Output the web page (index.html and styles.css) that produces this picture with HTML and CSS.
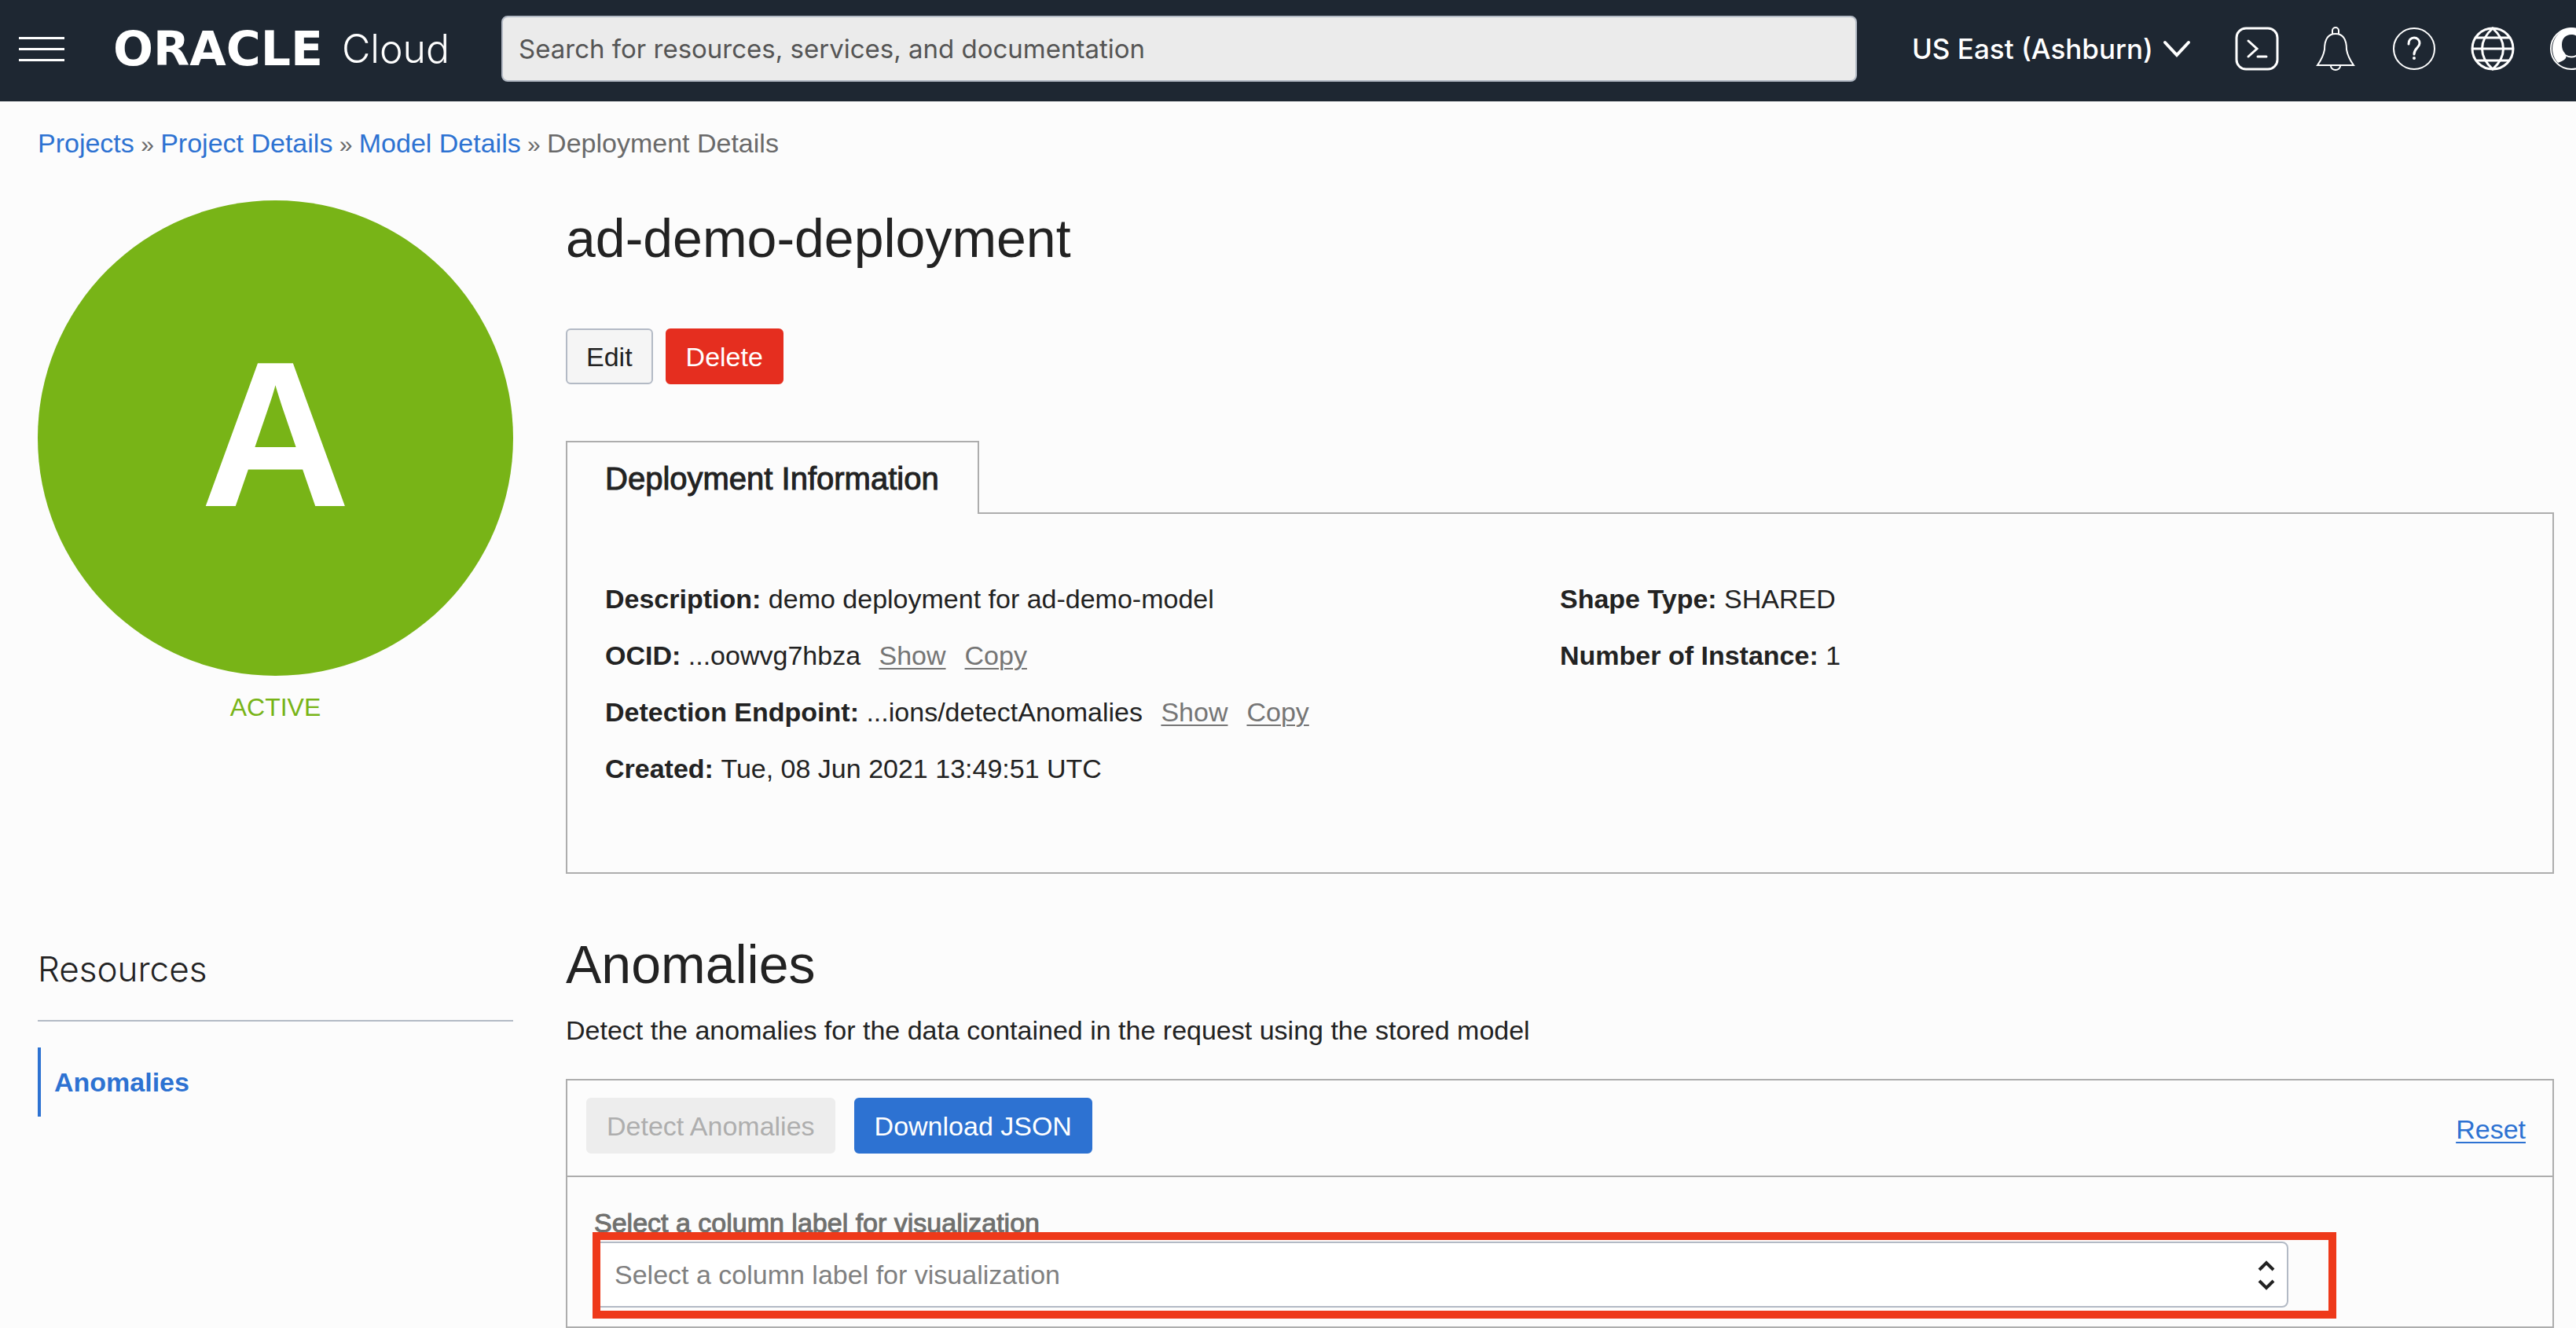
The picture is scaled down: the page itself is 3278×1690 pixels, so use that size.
FILE: index.html
```html
<!DOCTYPE html>
<html lang="en">
<head>
<meta charset="utf-8">
<title>Deployment Details</title>
<link rel="stylesheet" href="styles.css">
</head>
<body>
<header class="topbar">
  <button class="menu" aria-label="Open navigation menu"><span></span><span></span><span></span></button>
  <a class="brand" href="#"><span class="brand-name">ORACLE</span><span class="brand-product">Cloud</span></a>
  <input class="search" type="search" aria-label="Search" placeholder="Search for resources, services, and documentation">
  <div class="tools">
    <button class="region">US East (Ashburn)
      <svg width="36" height="24" viewBox="0 0 36 24" fill="none" stroke="currentColor" stroke-width="4" stroke-linecap="round"><path d="M3 4l15 16L33 4"/></svg>
    </button>
    <button class="tool" aria-label="Cloud Shell">
      <svg viewBox="0 0 56 56" fill="none" stroke="currentColor" stroke-width="3"><rect x="2" y="2" width="52" height="52" rx="12"/><path d="M17 18l11 10-11 10" stroke-linecap="round"/><path d="M29 38h11" stroke-linecap="round"/></svg>
    </button>
    <button class="tool" aria-label="Announcements">
      <svg viewBox="0 0 56 56" fill="none" stroke="currentColor" stroke-width="2"><path d="M24 9V5a4 4 0 0 1 8 0v4"/><path d="M5 49c5-7 8-14 9-20 0-14 5-20 14-20s14 6 14 20c1 6 4 13 9 20z"/><path d="M22 50a6 5 0 0 0 12 0"/></svg>
    </button>
    <button class="tool" aria-label="Help">
      <svg viewBox="0 0 56 56" fill="none" stroke="currentColor" stroke-width="2"><circle cx="28" cy="28" r="26"/><path d="M21 22c0-5 3-8 7-8s7 3 7 7c0 6-7 6-7 14" stroke-width="3" stroke-linecap="round"/><circle cx="28" cy="40" r="2" fill="currentColor" stroke="none"/></svg>
    </button>
    <button class="tool" aria-label="Language">
      <svg viewBox="0 0 56 56" fill="none" stroke="currentColor" stroke-width="3"><circle cx="28" cy="28" r="26"/><path d="M28 2C10 18 10 38 28 54C46 38 46 18 28 2z"/><path d="M2 28h52M7 14h42M7 43h42"/></svg>
    </button>
    <button class="tool" aria-label="Profile">
      <svg viewBox="0 0 56 56"><path fill="currentColor" d="M28 1a27 27 0 0 0-17 45c4-2 8-3 10-6 1-2 0-4-1-6-3-3-4-7-4-11 0-8 5-13 12-13s12 5 12 13c0 4-1 8-4 11-1 2-2 4-1 6 2 3 6 4 10 6A27 27 0 0 0 28 1z"/><path d="M20 36q8 5 16 0" fill="none" stroke="currentColor" stroke-width="2"/><circle cx="28" cy="28" r="26" fill="none" stroke="currentColor" stroke-width="2"/></svg>
    </button>
  </div>
</header>

<nav class="breadcrumb" aria-label="Breadcrumb">
  <a href="#">Projects</a><span class="sep"> » </span><a href="#">Project Details</a><span class="sep"> » </span><a href="#">Model Details</a><span class="sep"> » </span><span>Deployment Details</span>
</nav>

<div class="layout">
  <aside class="sidebar">
    <div class="status-badge">A</div>
    <p class="status-text">ACTIVE</p>
    <h3 class="resources-title">Resources</h3>
    <nav class="resources"><a class="resource-link" href="#anomalies">Anomalies</a></nav>
  </aside>

  <main class="content">
    <h1>ad-demo-deployment</h1>
    <div class="actions">
      <button class="btn btn-plain">Edit</button>
      <button class="btn btn-danger">Delete</button>
    </div>

    <div class="tabs" role="tablist"><button class="tab" role="tab" aria-selected="true">Deployment Information</button></div>
    <section class="details">
      <dl>
        <div><dt>Description:</dt> <dd>demo deployment for ad-demo-model</dd></div>
        <div><dt>OCID:</dt> <dd>...oowvg7hbza <a href="#">Show</a><a href="#">Copy</a></dd></div>
        <div><dt>Detection Endpoint:</dt> <dd>...ions/detectAnomalies <a href="#">Show</a><a href="#">Copy</a></dd></div>
        <div><dt>Created:</dt> <dd>Tue, 08 Jun 2021 13:49:51 UTC</dd></div>
      </dl>
      <dl>
        <div><dt>Shape Type:</dt> <dd>SHARED</dd></div>
        <div><dt>Number of Instance:</dt> <dd>1</dd></div>
      </dl>
    </section>

    <h2 id="anomalies">Anomalies</h2>
    <p class="lead">Detect the anomalies for the data contained in the request using the stored model</p>
    <section class="panel">
      <div class="toolbar">
        <button class="btn btn-disabled" disabled>Detect Anomalies</button>
        <button class="btn btn-primary">Download JSON</button>
        <a class="reset" href="#">Reset</a>
      </div>
      <div class="field">
        <label for="column">Select a column label for visualization</label>
        <div class="select-wrap">
          <select id="column"><option>Select a column label for visualization</option></select>
          <svg class="select-arrows" width="24" height="40" viewBox="0 0 24 40" fill="none" stroke="currentColor" stroke-width="4"><path d="M3 13l9-9 9 9M3 27l9 9 9-9"/></svg>
          <div class="highlight"></div>
        </div>
      </div>
    </section>
  </main>
</div>
</body>
</html>
```
FILE: styles.css
```css
* { box-sizing: border-box; }

body {
  margin: 0;
  background: #fcfcfc;
  color: #222;
  font: 34px/40px "Liberation Sans", Arial, sans-serif;
}

h1, h2, h3, p, dl, dd { margin: 0; }
a { color: #2d72d2; text-decoration: none; }
button, input, select { font: inherit; color: inherit; margin: 0; }
button { background: none; border: 0; padding: 0; cursor: pointer; }

.topbar {
  display: flex;
  align-items: center;
  height: 129px;
  padding: 0 0 5px 24px;
  overflow: hidden;
  background: #1e2732;
  color: #fff;
}

.menu {
  display: flex;
  flex-direction: column;
  gap: 11px;
  width: 58px;
  margin-right: 62px;
}
.menu span { height: 3px; background: #fff; }

.brand {
  display: flex;
  align-items: center;
  gap: 24px;
  width: 494px;
  color: #fff;
  white-space: nowrap;
}
.brand-name { font: bold 60px/64px "DejaVu Sans", sans-serif; }
.brand-product { font: 300 50px/64px Inter, sans-serif; }

.search {
  flex: 1;
  min-width: 0;
  height: 84px;
  padding: 0 20px;
  border: 2px solid #b3bac5;
  border-radius: 8px;
  background: #ebebeb;
  font-family: Inter, sans-serif;
  font-size: 33px;
}
.search::placeholder { color: #555; opacity: 1; }

.tools {
  display: flex;
  align-items: center;
  flex: none;
  gap: 44px;
  margin: 0 -22px 0 70px;
}
.tool, .tool svg { display: block; width: 56px; height: 56px; }
.region {
  display: flex;
  align-items: center;
  gap: 12px;
  margin-right: 12px;
  font-family: Inter, sans-serif;
  font-size: 35px;
  font-weight: 500;
}

.breadcrumb { padding: 33px 48px 0; color: #6a6a6a; }
.sep { font-size: 30px; line-height: 30px; }

.layout {
  display: flex;
  gap: 67px;
  padding: 53px 28px 0 48px;
}
.sidebar { flex: none; width: 605px; }
.content { flex: 1; min-width: 0; }

.status-badge {
  display: grid;
  place-items: center;
  aspect-ratio: 1;
  padding-bottom: 10px;
  border-radius: 50%;
  background: #78b417;
  color: #fff;
  font-size: 264px;
  font-weight: bold;
  line-height: 256px;
}
.status-text {
  margin-top: 20px;
  color: #78b417;
  font-size: 32px;
  text-align: center;
}
.resources-title {
  margin-top: 285px;
  padding-bottom: 37px;
  border-bottom: 2px solid #b3bac5;
  font: 300 44px/56px Inter, sans-serif;
}
.resources { margin-top: 33px; }
.resource-link {
  display: block;
  padding: 24px 17px;
  border-left: 4px solid #2d72d2;
  font-weight: bold;
}

h1, h2 { font-size: 68px; font-weight: normal; line-height: 80px; }
h1 { padding-top: 8px; }
h2 { margin-top: 75px; }

.actions { display: flex; gap: 16px; margin-top: 75px; }
.btn {
  height: 71px;
  padding: 0 24px;
  border: 2px solid transparent;
  border-radius: 6px;
}
.btn-plain { background: #f5f5f5; border-color: #b3bac5; }
.btn-danger { background: #e52e1f; border-color: #e52e1f; color: #fff; }
.btn-primary { background: #2d72d2; border-color: #2d72d2; color: #fff; }
.btn-disabled { background: #ededed; border-color: #ededed; color: #aeaeae; }

.tabs { display: flex; margin-top: 72px; }
.tab {
  position: relative;
  z-index: 1;
  margin-bottom: -2px;
  padding: 22px 49px 21px 48px;
  border: 2px solid #adadad;
  border-bottom: 0;
  background: #fcfcfc;
  font-size: 40px;
  line-height: 48px;
  -webkit-text-stroke: 1px;
}

.details {
  display: grid;
  grid-template-columns: 1fr 1fr;
  padding: 72px 48px 96px;
  border: 2px solid #adadad;
  line-height: 72px;
}
dt, dd { display: inline; }
dt { font-weight: bold; }
dd a {
  margin-left: 24px;
  color: #757575;
  text-decoration: underline;
  text-decoration-thickness: 2px;
  text-underline-offset: 4px;
}
dd a:first-child { margin-left: 14px; }

.lead { margin-top: 24px; }

.panel { margin-top: 42px; border: 2px solid #adadad; }
.toolbar {
  display: flex;
  align-items: center;
  gap: 24px;
  padding: 22px 34px 28px 24px;
  border-bottom: 2px solid #adadad;
}
.reset {
  margin-left: auto;
  padding-top: 8px;
  text-decoration: underline;
  text-decoration-thickness: 2px;
  text-underline-offset: 4px;
}

.field { padding: 38px 336px 24px 34px; }
.field label {
  display: block;
  margin-bottom: 4px;
  color: #70706e;
  -webkit-text-stroke: 1px;
}
.select-wrap { position: relative; }
.select-wrap select {
  display: block;
  width: 100%;
  height: 84px;
  padding: 0 24px;
  appearance: none;
  border: 2px solid #b3bac5;
  border-radius: 8px;
  background: #fff;
  color: #808080;
}
.select-arrows {
  position: absolute;
  top: 23px;
  right: 16px;
  color: #222;
  pointer-events: none;
}
.highlight {
  position: absolute;
  inset: -12px -61px -14px -2px;
  border: 10px solid #ee391a;
  pointer-events: none;
}
```
